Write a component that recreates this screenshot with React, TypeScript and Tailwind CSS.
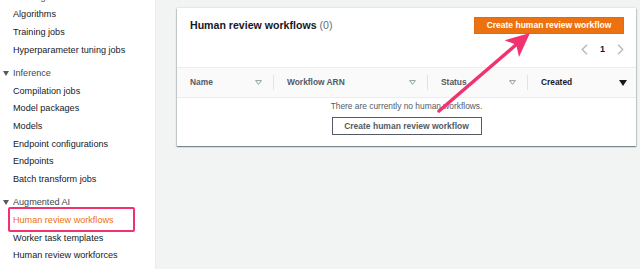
import React from "react";

const Tri = () => (
  <svg width="6" height="5" viewBox="0 0 6 5" className="block">
    <path d="M0 0H6L3 5Z" fill="#545b64" />
  </svg>
);

const Funnel = () => (
  <svg width="7" height="5" viewBox="0 0 7 5" className="block">
    <path d="M0.6 0.6H6.4L3.5 4.4Z" fill="none" stroke="#879596" strokeWidth="0.9" strokeLinejoin="round" />
  </svg>
);

const SortDown = () => (
  <svg width="8" height="6" viewBox="0 0 8 6" className="block">
    <path d="M0 0H8L4 6Z" fill="#16191f" />
  </svg>
);

const Chevron = ({ dir }: { dir: "l" | "r" }) => (
  <svg width="7" height="11" viewBox="0 0 7 11" className="block">
    <path
      d={dir === "l" ? "M6 0.8L1.2 5.5L6 10.2" : "M1 0.8L5.8 5.5L1 10.2"}
      fill="none"
      stroke="#aab7b8"
      strokeWidth="1.2"
    />
  </svg>
);

function Heading({ label }: { label: string }) {
  return (
    <div className="flex items-center h-[17.6px] mt-[6px] first:mt-0 pl-[3px] gap-[4px] text-[#414750]">
      <Tri />
      <span>{label}</span>
    </div>
  );
}

function Item({ label }: { label: string }) {
  return <div className="flex items-center h-[17.6px] pl-[13px] text-[#16191f]">{label}</div>;
}

function HeaderCell({ label, last, active }: { label: string; last?: boolean; active?: boolean }) {
  return (
    <div className="flex items-center h-full">
      <div className={"flex-1 flex items-center justify-between pl-[13px] " + (last ? "pr-[9px]" : "pr-[11px]")}>
        <span className={"font-bold " + (active ? "text-[#16191f]" : "text-[#545b64]")}>{label}</span>
        {active ? <SortDown /> : <Funnel />}
      </div>
      {!last && <div className="w-px h-[15px] bg-[#e1e4e4]" />}
    </div>
  );
}

export default function App() {
  return (
    <div className="relative w-[640px] h-[269px] overflow-hidden flex font-['Liberation_Sans',Arial,sans-serif] bg-[#f2f3f3]">
      <aside className="w-[156px] shrink-0 h-full bg-white border-r border-[#eaeded] text-[9.1px] leading-none">
        <div className="-mt-[11.4px] flex flex-col">
          <Heading label="Training" />
          <Item label="Algorithms" />
          <Item label="Training jobs" />
          <Item label="Hyperparameter tuning jobs" />
          <Heading label="Inference" />
          <Item label="Compilation jobs" />
          <Item label="Model packages" />
          <Item label="Models" />
          <Item label="Endpoint configurations" />
          <Item label="Endpoints" />
          <Item label="Batch transform jobs" />
          <Heading label="Augmented AI" />
          <div className="relative flex items-center h-[17.6px] pl-[13px] text-[#ec7211]">
            Human review workflows
            <span className="absolute left-[8px] top-[-4.5px] w-[127px] h-[25px] border-[2.5px] border-[#f0326f] rounded-[2px]" />
          </div>
          <Item label="Worker task templates" />
          <Item label="Human review workforces" />
        </div>
      </aside>

      <main className="flex-1 pl-[21px] pt-[8px]">
        <div className="w-[459px] bg-white shadow-[0_1px_1px_0_rgba(0,28,36,0.3),1px_1px_1px_0_rgba(0,28,36,0.15),-1px_1px_1px_0_rgba(0,28,36,0.15),0_-1px_1px_0_rgba(0,28,36,0.05)]">
          <div className="h-[59px] flex justify-between pl-[13px] pr-[12px] pt-[9px]">
            <div className="pt-[2px] h-[14px] flex items-center text-[10.6px] leading-none">
              <span className="font-bold text-[#16191f]">Human review workflows</span>
              <span className="text-[#687078] ml-[3px]">(0)</span>
            </div>
            <div className="flex flex-col items-end">
              <div className="w-[150px] h-[17px] bg-[#ec7211] border border-[#e36b0e] flex items-center justify-center text-white font-bold text-[8.5px] leading-none">
                Create human review workflow
              </div>
              <div className="mt-[9px] h-[12px] flex items-center gap-[12px]">
                <Chevron dir="l" />
                <span className="font-bold text-[9px] text-[#16191f] leading-none">1</span>
                <Chevron dir="r" />
              </div>
            </div>
          </div>

          <div className="h-[31px] border-y border-[#eaeded] bg-[#fafafa] grid grid-cols-[97px_154px_100px_1fr] text-[8.4px] leading-none">
            <HeaderCell label="Name" />
            <HeaderCell label="Workflow ARN" />
            <HeaderCell label="Status" />
            <HeaderCell label="Created" last active />
          </div>

          <div className="flex flex-col items-center pt-[2px] pb-[11px]">
            <div className="h-[12px] flex items-center text-[8.4px] text-[#545b64] leading-none">
              There are currently no human workflows.
            </div>
            <div className="mt-[5px] w-[150px] h-[18px] border border-[#545b64] flex items-center justify-center text-[8.5px] font-bold text-[#545b64] leading-none">
              Create human review workflow
            </div>
          </div>
        </div>
      </main>

      <svg className="absolute inset-0 pointer-events-none" width="640" height="269" viewBox="0 0 640 269">
        <line x1="439" y1="111" x2="517" y2="44" stroke="#f0326f" strokeWidth="3.5" strokeLinecap="round" />
        <polygon points="530,33 504.6,40.3 516.3,44.8 519,57.1" fill="#f0326f" />
      </svg>
    </div>
  );
}
